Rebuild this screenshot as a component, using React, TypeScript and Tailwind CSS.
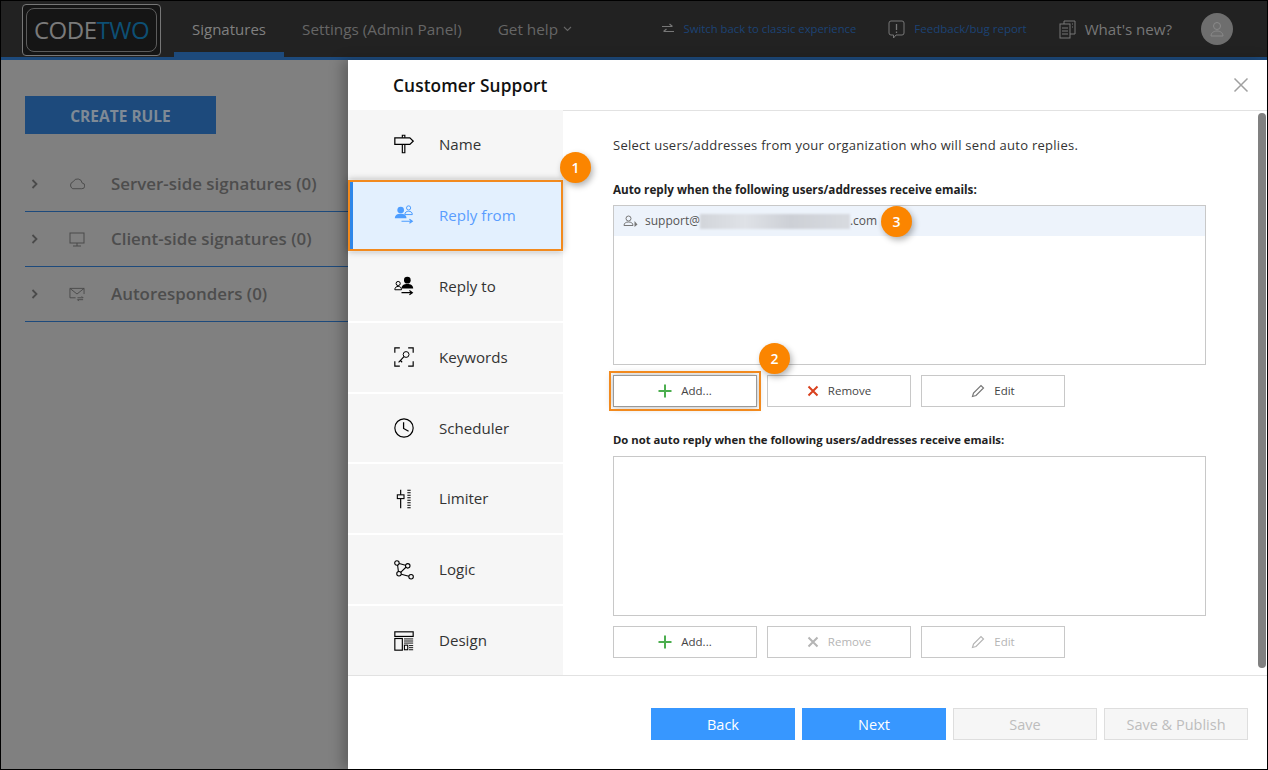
import React from "react";

const sans = "[font-family:'Open_Sans','Noto_Sans',sans-serif]";

function Ic({ children, w = 24, h = 24, cls = "", vb }: { children: React.ReactNode; w?: number; h?: number; cls?: string; vb?: string }) {
  return (
    <svg width={w} height={h} viewBox={vb ?? `0 0 ${w} ${h}`} fill="none" stroke="currentColor" strokeWidth="1" className={cls}>
      {children}
    </svg>
  );
}

const navIcons: Record<string, React.ReactNode> = {
  Name: (
    <Ic w={20} h={20} vb="0 0 24 24">
      <path d="M1 4.500h18l4 4-4 4H1z" strokeWidth="1.500" />
      <path d="M10 4.500v-3h3v3M10 12.500v10h3v-10" strokeWidth="1.400" />
    </Ic>
  ),
  "Reply from": (
    <Ic w={20} h={20} vb="0 0 24 24">
      <circle cx="8" cy="6" r="4" fill="currentColor" stroke="none" />
      <path d="M1 16c0-4 3-5.500 7-5.500s7 1.500 7 5.500z" fill="currentColor" stroke="none" />
      <circle cx="17.500" cy="3.500" r="2.500" strokeWidth="1.200" />
      <path d="M13 11.500c0-3 2.200-4 4.500-4s4.500 1 4.500 4z" strokeWidth="1.200" />
      <path d="M9 19.500h13M18.500 17l3.500 2.500-3.500 2.500" strokeWidth="1.400" />
    </Ic>
  ),
  "Reply to": (
    <Ic w={20} h={20} vb="0 0 24 24">
      <circle cx="16" cy="5" r="4" fill="currentColor" stroke="none" />
      <path d="M9 15c0-4 3-5.500 7-5.500s7 1.500 7 5.500z" fill="currentColor" stroke="none" />
      <circle cx="5" cy="9" r="2.500" strokeWidth="1.200" />
      <path d="M1 16.500c0-3 2-4 4-4s4 1 4 4z" strokeWidth="1.200" />
      <path d="M9 20h13M18.500 17.500L22 20l-3.500 2.500" strokeWidth="1.400" />
    </Ic>
  ),
  Keywords: (
    <Ic w={20} h={20} vb="0 0 24 24">
      <path d="M1 7V1h6M17 1h6v6M23 17v6h-6M7 23H1v-6" strokeWidth="1.400" />
      <circle cx="14.500" cy="9" r="3.500" strokeWidth="1.200" />
      <path d="M12 11.500l-6.500 7M8 16.500l1.800 1.800" strokeWidth="1.300" />
    </Ic>
  ),
  Scheduler: (
    <Ic w={20} h={20} vb="0 0 24 24">
      <circle cx="12" cy="12" r="11" strokeWidth="1.400" />
      <path d="M11.500 5v7.500l6 3.500" strokeWidth="1.500" />
    </Ic>
  ),
  Limiter: (
    <Ic w={20} h={20} vb="0 0 24 24">
      <path d="M8 1v6M8 12v11" strokeWidth="1.400" />
      <rect x="4" y="7" width="8" height="4.500" strokeWidth="1.300" />
      <path d="M16 1.500h4M16 4.500h4M16 7.500h4M16 10.500h4M16 13.500h4M16 16.500h4M16 19.500h4M16 22.500h4" strokeWidth="1.200" />
    </Ic>
  ),
  Logic: (
    <Ic w={20} h={20} vb="0 0 24 24">
      <circle cx="3.500" cy="3.500" r="2.700" strokeWidth="1.300" />
      <circle cx="16.500" cy="7" r="2.700" strokeWidth="1.300" />
      <circle cx="6" cy="16.500" r="2.700" strokeWidth="1.300" />
      <circle cx="20.500" cy="20" r="2.700" strokeWidth="1.300" />
      <path d="M6.200 4.200l7.600 2M4.300 6l1 8M14.300 8.700L8 14.800M8.700 17.200l9.100 2.200" strokeWidth="1.300" />
    </Ic>
  ),
  Design: (
    <Ic w={20} h={20} vb="0 0 24 24">
      <rect x="1" y="1" width="22" height="5.500" strokeWidth="1.400" />
      <rect x="1" y="9" width="9" height="14" strokeWidth="1.400" />
      <rect x="12.500" y="17" width="4" height="5.500" strokeWidth="1.300" />
      <path d="M12 9.500h11M12 12h11M12 14.500h11M18 17.500h5M18 20h5M18 22.500h5" strokeWidth="1.100" />
    </Ic>
  ),
};

const navItems = ["Name", "Reply from", "Reply to", "Keywords", "Scheduler", "Limiter", "Logic", "Design"];

function Callout({ n, cls }: { n: number; cls: string }) {
  return (
    <div className={`absolute z-20 flex h-[31px] w-[31px] items-center justify-center rounded-full bg-[#fb8500] text-[14px] font-semibold text-white shadow-[2px_3px_6px_rgba(0,0,0,0.3)] ${cls}`}>
      {n}
    </div>
  );
}

function Plus() {
  return (
    <Ic w={14} h={14} cls="text-[#4cae4f]">
      <path d="M7 .5v13M.5 7h13" strokeWidth="2" />
    </Ic>
  );
}
function Cross({ c }: { c: string }) {
  return (
    <Ic w={12} h={12} cls={c}>
      <path d="M1.500 1.500l9 9M10.500 1.500l-9 9" strokeWidth="2" />
    </Ic>
  );
}
function Pencil({ c }: { c: string }) {
  return (
    <Ic w={14} h={14} cls={c}>
      <path d="M1.500 12.500l1-3.500 7.500-7.500 2.500 2.500-7.500 7.500z" strokeWidth="1.200" />
    </Ic>
  );
}

function Btn({ children, label, disabled, extra }: { children: React.ReactNode; label: string; disabled?: boolean; extra?: string }) {
  return (
    <div className={`flex h-8 w-36 items-center justify-center gap-[9px] border bg-white text-[11.500px] ${disabled ? "text-[#b5b5b5]" : "text-[#444]"} ${extra ?? "border-[#c8c8c8]"}`}>
      {children}
      <span>{label}</span>
    </div>
  );
}

function SideRow({ icon, label }: { icon: React.ReactNode; label: string }) {
  return (
    <div className="flex h-[55px] items-center border-b border-[#1d4a7c]">
      <svg width="8" height="10" viewBox="0 0 8 10" fill="none" stroke="#4a4a4a" strokeWidth="1.800" className="ml-[6px]">
        <path d="M1.500 1l4 4-4 4" />
      </svg>
      <div className="ml-[30px] flex w-[16px] justify-center text-[#4a4a4a]">{icon}</div>
      <span className="ml-[26px] text-[16.900px] font-semibold whitespace-nowrap text-[#4d4d4d]">{label}</span>
    </div>
  );
}

export default function App() {
  return (
    <div className={`relative flex h-[770px] w-[1268px] flex-col overflow-hidden border border-black bg-white ${sans}`}>
      {/* Top bar */}
      <header className="flex h-[59px] shrink-0 border-b-[3px] border-[#1d4a7c] bg-[#222222]">
        <div className="ml-[21px] mt-[3px] flex h-[52px] w-[139px] items-center justify-center rounded-[4px] border border-[#777] bg-[#151515] p-[3px]">
          <div className="flex h-full w-full items-center justify-center rounded-[8px] border border-[#5c5c5c] text-[24px] leading-none tracking-[-0.5px]">
            <span className="text-[#7a7a7a]">CODE</span>
            <span className="text-[#0d4f74]">TWO</span>
          </div>
        </div>
        <div className="ml-[13px] flex h-[56px] w-[110px] items-center justify-center border-b-[5px] border-[#1d4a7c] pt-[5px] text-[15px] text-[#808080]">
          Signatures
        </div>
        <div className="ml-[18px] flex items-center text-[15.300px] text-[#666]">Settings (Admin Panel)</div>
        <div className="ml-[36px] flex items-center gap-[5px] text-[15.300px] text-[#666]">
          Get help
          <svg width="9" height="6" viewBox="0 0 9 6" fill="none" stroke="#666" strokeWidth="1.100">
            <path d="M1 1l3.500 3.500L8 1" />
          </svg>
        </div>
        <div className="ml-auto flex items-center pr-[34px]">
          <Ic w={12} h={14} cls="text-[#777]">
            <path d="M0 4.500h10M7.500 2L10.500 4.500M12 9.500H2M4.500 7L1.500 9.500" strokeWidth="1.200" />
          </Ic>
          <span className="ml-[10px] text-[11.300px] text-[#1c4275]">Switch back to classic experience</span>
          <Ic w={17} h={19} cls="ml-[32px] text-[#777]">
            <path d="M3 1h11a2 2 0 012 2v10a2 2 0 01-2 2H8l-2.500 3v-3H3a2 2 0 01-2-2V3a2 2 0 012-2z" />
            <path d="M8.500 4v6M8.500 11.500v1.500" strokeWidth="1.300" />
          </Ic>
          <span className="ml-[9px] text-[11.500px] text-[#1c4275]">Feedback/bug report</span>
          <Ic w={17} h={19} cls="ml-[32px] text-[#777]">
            <rect x="1" y="4" width="10" height="14" />
            <path d="M5 4V1h11v13h-5M3 8h6M3 11h6M3 14h6M13 4h1M13 7h1" />
          </Ic>
          <span className="ml-[9px] text-[15.100px] text-[#777]">What's new?</span>
          <div className="ml-[29px] flex h-8 w-8 items-center justify-center rounded-full bg-[#6e6e6e]">
            <Ic w={14} h={16} cls="text-[#8a8a8a]">
              <circle cx="7" cy="5" r="3.500" />
              <path d="M1 15c0-3 2.500-5 6-5s6 2 6 5z" />
            </Ic>
          </div>
        </div>
      </header>

      <div className="flex min-h-0 flex-1">
        {/* Dimmed page */}
        <aside className="w-[347px] shrink-0 bg-[#808080] pl-[24px] pt-[36px]">
          <div className="flex h-[38px] w-[191px] items-center justify-center bg-[#1d4a7c] pt-[3px] text-[15.500px] font-bold text-[#7f8a96]">
            CREATE RULE
          </div>
          <div className="mt-[23px]">
            <SideRow
              label="Server-side signatures (0)"
              icon={
                <Ic w={17} h={12}>
                  <path d="M4 11h9.500a3 3 0 00.500-6 5 5 0 00-9.500-1.500A4 4 0 004 11z" />
                </Ic>
              }
            />
            <SideRow
              label="Client-side signatures (0)"
              icon={
                <Ic w={16} h={15}>
                  <rect x="1" y="1" width="14" height="10" />
                  <path d="M8 11v3M4 14h8" />
                </Ic>
              }
            />
            <SideRow
              label="Autoresponders (0)"
              icon={
                <Ic w={17} h={15}>
                  <path d="M7 11H1V1h15v6M1 1l7.500 6L16 1" />
                  <path d="M9 11h6l-1.500-1.500M15 13H9l1.500 1.500" />
                </Ic>
              }
            />
          </div>
        </aside>

        {/* Modal */}
        <main className="relative flex min-w-0 flex-1 flex-col bg-white shadow-[-6px_0_12px_rgba(0,0,0,0.25)]">
          <div className="flex h-[50px] shrink-0 items-center justify-between pl-[45px] pr-[18px]">
            <h1 className="pt-[2px] text-[17.300px] leading-none font-semibold tracking-[0.1px] text-[#111]">Customer Support</h1>
            <Ic w={16} h={16} cls="text-[#a0a0a0]">
              <path d="M1.500 1.500l13 13M14.500 1.500l-13 13" strokeWidth="1.500" />
            </Ic>
          </div>

          <div className="flex h-[566px] shrink-0 border-b border-[#e2e2e2]">
            <nav className="relative z-10 flex w-[215px] shrink-0 flex-col gap-[2px]">
              {navItems.map((item) => {
                const active = item === "Reply from";
                return (
                  <div
                    key={item}
                    className={
                      active
                        ? "relative -my-[1px] flex h-[71px] items-center border-2 border-[#f28a1e] bg-[#e3f0fe] pl-[44px] text-[#4d9dff] shadow-[0_0_7px_rgba(0,0,0,0.3)] before:absolute before:inset-y-0 before:left-0 before:w-[3px] before:bg-[#2e86e8]"
                        : "flex h-[69px] items-center bg-[#f6f6f6] pl-[46px] text-black"
                    }
                  >
                    <div className="flex h-5 w-5 shrink-0 items-center justify-center">{navIcons[item]}</div>
                    <span className={`ml-[25px] text-[15.100px] ${active ? "text-[#5a9dff]" : "text-[#333]"}`}>{item}</span>
                  </div>
                );
              })}
            </nav>

            <section className="relative flex min-w-0 flex-1 border-t border-[#e2e2e2]">
              <div className="w-[643px] shrink-0 pl-[50px] pt-[25px] text-[#333]">
                <p className="text-[13px] leading-[18px] tracking-[0.27px]">Select users/addresses from your organization who will send auto replies.</p>
                <p className="mt-[27px] text-[11.700px] leading-[16px] font-bold text-[#222]">Auto reply when the following users/addresses receive emails:</p>
                <div className="mt-[8px] h-40 w-[593px] border border-[#c8c8c8]">
                  <div className="flex h-[30px] items-center bg-[#edf3fb] pl-[9px] text-[12px] text-[#555]">
                    <Ic w={15} h={13} cls="text-[#777]">
                      <circle cx="5.500" cy="3.500" r="2.500" />
                      <path d="M1 10.500c0-2.500 2-3.500 4.500-3.500s4.500 1 4.500 3.500z" />
                      <path d="M11.500 6v6l3-2.500z" fill="currentColor" stroke="none" />
                    </Ic>
                    <span className="ml-[7px]">support@</span>
                    <div className="h-[15px] w-[150px] bg-[linear-gradient(90deg,#d2d5da,#dfe2e7_30%,#cdd0d6_60%,#d8dbe0)] blur-[1px]" />
                    <span>.com</span>
                  </div>
                </div>
                <div className="mt-[10px] flex gap-[10px]">
                  <Btn label="Add..." extra="outline-2 outline-offset-[2px] outline-[#f28a1e] border-[#999] shadow-[0_0_8px_rgba(0,0,0,0.3)]">
                    <Plus />
                  </Btn>
                  <Btn label="Remove">
                    <Cross c="text-[#d9411e]" />
                  </Btn>
                  <Btn label="Edit">
                    <Pencil c="text-[#777]" />
                  </Btn>
                </div>
                <p className="mt-[25px] text-[11.300px] leading-[16px] font-bold text-[#222]">Do not auto reply when the following users/addresses receive emails:</p>
                <div className="mt-[8px] h-40 w-[593px] border border-[#c8c8c8]" />
                <div className="mt-[10px] flex gap-[10px]">
                  <Btn label="Add...">
                    <Plus />
                  </Btn>
                  <Btn label="Remove" disabled>
                    <Cross c="text-[#b5b5b5]" />
                  </Btn>
                  <Btn label="Edit" disabled>
                    <Pencil c="text-[#b5b5b5]" />
                  </Btn>
                </div>
              </div>
              <div className="ml-[52px] mt-[2px] h-[555px] w-[8px] shrink-0 rounded-full bg-[#808080]" />
            </section>
          </div>

          <footer className="flex flex-1 items-start justify-end gap-[7px] pr-[19px] pt-[32px] text-[14.500px]">
            <div className="flex h-8 w-36 items-center justify-center bg-[#3797ff] pt-[2px] text-white">Back</div>
            <div className="flex h-8 w-36 items-center justify-center bg-[#3797ff] pt-[2px] text-white">Next</div>
            <div className="flex h-8 w-36 items-center justify-center border border-[#dedede] bg-[#f6f6f6] pt-[2px] text-[#bdbdbd]">Save</div>
            <div className="flex h-8 w-36 items-center justify-center border border-[#dedede] bg-[#f6f6f6] pt-[2px] text-[#bdbdbd]">Save &amp; Publish</div>
          </footer>

          <Callout n={1} cls="left-[212px] top-[92px]" />
          <Callout n={2} cls="left-[411px] top-[283px]" />
          <Callout n={3} cls="left-[533px] top-[146px]" />
        </main>
      </div>
    </div>
  );
}
